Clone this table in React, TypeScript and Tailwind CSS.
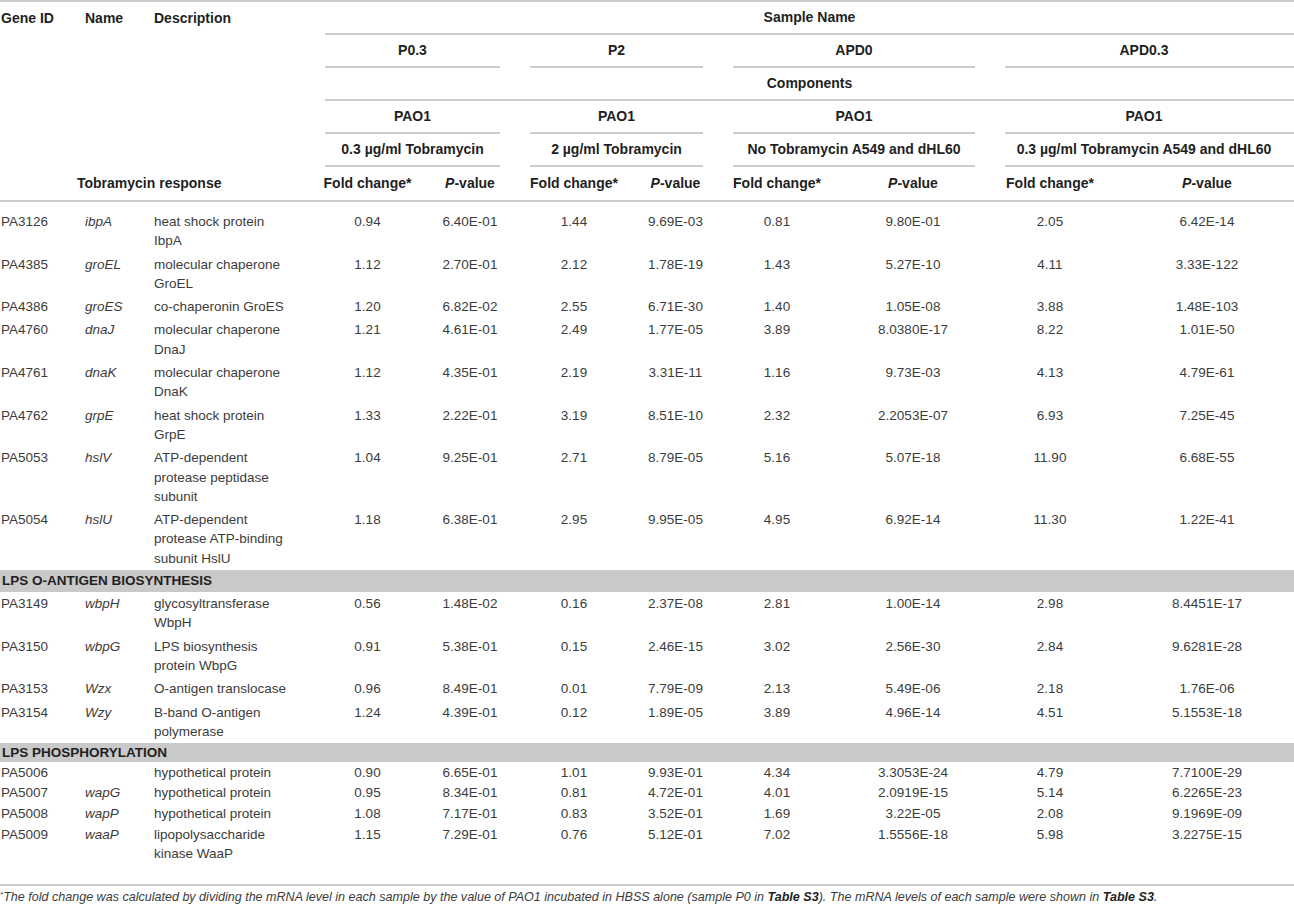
import React from "react";

type R = { id: string; name: string; desc: string; vals: string[] };

const sec1: R[] = [
  { id: "PA3126", name: "ibpA", desc: "heat shock protein IbpA", vals: ["0.94", "6.40E-01", "1.44", "9.69E-03", "0.81", "9.80E-01", "2.05", "6.42E-14"] },
  { id: "PA4385", name: "groEL", desc: "molecular chaperone GroEL", vals: ["1.12", "2.70E-01", "2.12", "1.78E-19", "1.43", "5.27E-10", "4.11", "3.33E-122"] },
  { id: "PA4386", name: "groES", desc: "co-chaperonin GroES", vals: ["1.20", "6.82E-02", "2.55", "6.71E-30", "1.40", "1.05E-08", "3.88", "1.48E-103"] },
  { id: "PA4760", name: "dnaJ", desc: "molecular chaperone DnaJ", vals: ["1.21", "4.61E-01", "2.49", "1.77E-05", "3.89", "8.0380E-17", "8.22", "1.01E-50"] },
  { id: "PA4761", name: "dnaK", desc: "molecular chaperone DnaK", vals: ["1.12", "4.35E-01", "2.19", "3.31E-11", "1.16", "9.73E-03", "4.13", "4.79E-61"] },
  { id: "PA4762", name: "grpE", desc: "heat shock protein GrpE", vals: ["1.33", "2.22E-01", "3.19", "8.51E-10", "2.32", "2.2053E-07", "6.93", "7.25E-45"] },
  { id: "PA5053", name: "hslV", desc: "ATP-dependent protease peptidase subunit", vals: ["1.04", "9.25E-01", "2.71", "8.79E-05", "5.16", "5.07E-18", "11.90", "6.68E-55"] },
  { id: "PA5054", name: "hslU", desc: "ATP-dependent protease ATP-binding subunit HslU", vals: ["1.18", "6.38E-01", "2.95", "9.95E-05", "4.95", "6.92E-14", "11.30", "1.22E-41"] },
];

const sec2: R[] = [
  { id: "PA3149", name: "wbpH", desc: "glycosyltransferase WbpH", vals: ["0.56", "1.48E-02", "0.16", "2.37E-08", "2.81", "1.00E-14", "2.98", "8.4451E-17"] },
  { id: "PA3150", name: "wbpG", desc: "LPS biosynthesis protein WbpG", vals: ["0.91", "5.38E-01", "0.15", "2.46E-15", "3.02", "2.56E-30", "2.84", "9.6281E-28"] },
  { id: "PA3153", name: "Wzx", desc: "O-antigen translocase", vals: ["0.96", "8.49E-01", "0.01", "7.79E-09", "2.13", "5.49E-06", "2.18", "1.76E-06"] },
  { id: "PA3154", name: "Wzy", desc: "B-band O-antigen polymerase", vals: ["1.24", "4.39E-01", "0.12", "1.89E-05", "3.89", "4.96E-14", "4.51", "5.1553E-18"] },
];

const sec3: R[] = [
  { id: "PA5006", name: "", desc: "hypothetical protein", vals: ["0.90", "6.65E-01", "1.01", "9.93E-01", "4.34", "3.3053E-24", "4.79", "7.7100E-29"] },
  { id: "PA5007", name: "wapG", desc: "hypothetical protein", vals: ["0.95", "8.34E-01", "0.81", "4.72E-01", "4.01", "2.0919E-15", "5.14", "6.2265E-23"] },
  { id: "PA5008", name: "wapP", desc: "hypothetical protein", vals: ["1.08", "7.17E-01", "0.83", "3.52E-01", "1.69", "3.22E-05", "2.08", "9.1969E-09"] },
  { id: "PA5009", name: "waaP", desc: "lipopolysaccharide kinase WaaP", vals: ["1.15", "7.29E-01", "0.76", "5.12E-01", "7.02", "1.5556E-18", "5.98", "3.2275E-15"] },
];

const GRID = "grid grid-cols-[85px_69px_171px_85px_120px_88px_115px_88px_184px_90px_224px]";

function Row({ r, tight }: { r: R; tight?: boolean }) {
  return (
    <div className={`${GRID} ${tight ? "py-[0.7px]" : "py-[2px]"} leading-[19.3px]`}>
      <div className="pl-[1px]">{r.id}</div>
      <div className="italic">{r.name}</div>
      <div className="pr-[35px]">{r.desc}</div>
      {r.vals.map((v, i) => (
        <div key={i} className="text-center whitespace-nowrap">
          {v}
        </div>
      ))}
    </div>
  );
}

function Group({ label, last }: { label: string; last?: boolean }) {
  return (
    <div className="col-span-2 flex h-full">
      <div
        className={
          last
            ? "flex-1 flex items-center justify-center border-b-2 border-[#cdcdcd] pr-[36px] whitespace-nowrap"
            : "flex-1 flex items-center justify-center border-b-2 border-[#cdcdcd] mr-[30px] whitespace-nowrap"
        }
      >
        {label}
      </div>
    </div>
  );
}

function Section({ title, tall }: { title: string; tall?: boolean }) {
  return (
    <div
      className={
        tall
          ? "h-[22px] bg-[#c9c9c9] flex items-center pl-[2px] font-bold text-[13.5px] text-[#1f1f1f]"
          : "h-[19px] bg-[#c9c9c9] flex items-center pl-[2px] font-bold text-[13.5px] text-[#1f1f1f]"
      }
    >
      {title}
    </div>
  );
}

export default function App() {
  return (
    <div className="w-[1294px] h-[909px] overflow-hidden bg-white font-['Liberation_Sans',Arial,sans-serif]">
      <div className="w-[1319px]">
        {/* header */}
        <div className="border-t-2 border-[#cdcdcd] text-[14px] font-bold text-[#1f1f1f]">
          <div className={`${GRID} h-[33px]`}>
            <div className="flex items-center pl-[1px]">Gene ID</div>
            <div className="flex items-center">Name</div>
            <div className="flex items-center">Description</div>
            <div className="col-span-8 flex items-center justify-center border-b-2 border-[#cdcdcd] pr-[25px]">Sample Name</div>
          </div>
          <div className={`${GRID} h-[33px]`}>
            <div className="col-span-3" />
            <Group label="P0.3" />
            <Group label="P2" />
            <Group label="APD0" />
            <Group label="APD0.3" last />
          </div>
          <div className={`${GRID} h-[33px]`}>
            <div className="col-span-3" />
            <div className="col-span-8 flex items-center justify-center border-b-2 border-[#cdcdcd] pr-[25px]">Components</div>
          </div>
          <div className={`${GRID} h-[33px]`}>
            <div className="col-span-3" />
            <Group label="PAO1" />
            <Group label="PAO1" />
            <Group label="PAO1" />
            <Group label="PAO1" last />
          </div>
          <div className={`${GRID} h-[33px]`}>
            <div className="col-span-3" />
            <Group label="0.3 µg/ml Tobramycin" />
            <Group label="2 µg/ml Tobramycin" />
            <Group label="No Tobramycin A549 and dHL60" />
            <Group label="0.3 µg/ml Tobramycin A549 and dHL60" last />
          </div>
          <div className={`${GRID} h-[35px] border-b-2 border-[#cdcdcd]`}>
            <div className="col-span-3 flex items-center pl-[77px]">Tobramycin response</div>
            {[0, 1, 2, 3].map((k) => (
              <React.Fragment key={k}>
                <div className="flex items-center justify-center whitespace-nowrap">Fold change*</div>
                <div className="flex items-center justify-center whitespace-nowrap">
                  <span className="italic">P</span>-value
                </div>
              </React.Fragment>
            ))}
          </div>
        </div>

        {/* body */}
        <div className="pt-[8px] pb-[20px] border-b-2 border-[#cdcdcd] text-[13.5px] text-[#3c3c3c]">
          {sec1.map((r) => (
            <Row key={r.id} r={r} />
          ))}
          <Section title="LPS O-ANTIGEN BIOSYNTHESIS" tall />
          {sec2.map((r) => (
            <Row key={r.id} r={r} />
          ))}
          <Section title="LPS PHOSPHORYLATION" />
          {sec3.map((r) => (
            <Row key={r.id} r={r} tight />
          ))}
        </div>

        {/* footnote */}
        <div className="pt-[3px] text-[12.55px] leading-[16px] italic text-[#3c3c3c] whitespace-nowrap">
          <sup className="text-[8px]">*</sup>The fold change was calculated by dividing the mRNA level in each sample by the value of PAO1 incubated in HBSS alone (sample P0 in{" "}
          <b className="text-[#1f1f1f]">Table S3</b>). The mRNA levels of each sample were shown in <b className="text-[#1f1f1f]">Table S3</b>.
        </div>
      </div>
    </div>
  );
}
